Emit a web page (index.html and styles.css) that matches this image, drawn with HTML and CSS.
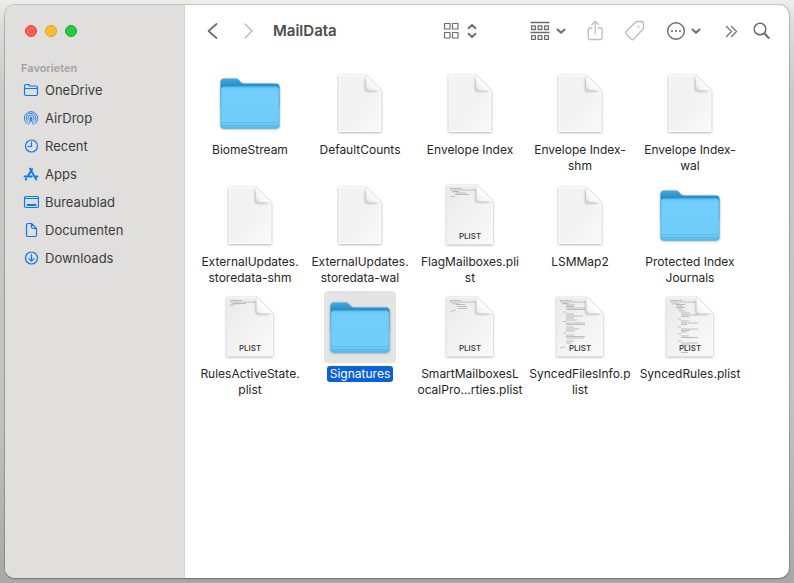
FILE: index.html
```html
<!DOCTYPE html>
<html lang="nl">
<head>
<meta charset="utf-8">
<meta name="viewport" content="width=device-width, initial-scale=1">
<title>MailData</title>
<link rel="stylesheet" href="styles.css">
</head>
<body>
<svg class="defs" aria-hidden="true">
  <defs>
    <linearGradient id="folder-back" x1="0" y1="0" x2="0" y2="1"><stop offset="0" stop-color="#4aa9dc"/><stop offset=".35" stop-color="#1583c1"/></linearGradient>
    <linearGradient id="folder-front" x1="0" y1="0" x2="0" y2="1"><stop offset="0" stop-color="#68c5f4"/><stop offset=".1" stop-color="#72cffb"/><stop offset="1" stop-color="#70cdfb"/></linearGradient>
    <linearGradient id="paper" x1="0" y1="0" x2="1" y2="1"><stop offset="0" stop-color="#f3f3f3"/><stop offset=".5" stop-color="#f2f2f2"/><stop offset="1" stop-color="#fafafa"/></linearGradient>
    <linearGradient id="paper-plist" x1="0" y1="0" x2="1" y2="1"><stop offset="0" stop-color="#eaeaea"/><stop offset="1" stop-color="#fafafa"/></linearGradient>
    <linearGradient id="curl" gradientUnits="userSpaceOnUse" x1="42" y1="23" x2="50" y2="15"><stop offset="0" stop-color="#cfcfcf"/><stop offset=".35" stop-color="#f2f2f2"/><stop offset="1" stop-color="#fff"/></linearGradient>
    <filter id="soft" x="-20%" y="-20%" width="140%" height="140%" color-interpolation-filters="sRGB"><feDropShadow dx="0" dy=".6" stdDeviation=".8" flood-opacity=".38"/></filter>
    <filter id="blur" x="-50%" y="-50%" width="200%" height="200%"><feGaussianBlur stdDeviation="1.3"/></filter>
  </defs>
  <symbol id="folder" viewBox="0 0 72 72">
    <g filter="url(#soft)">
      <path fill="url(#folder-back)" d="M6.500 15q0-3.500 3.500-3.500h12c3 0 4.500 5 8 5h32q3.500 0 3.500 3.500v20h-59z"/>
      <path fill="url(#folder-front)" d="M6.500 23q0-3.500 3.500-3.500h52q3.500 0 3.500 3.500v35q0 3.500-3.500 3.500h-52q-3.500 0-3.500-3.500z"/>
    </g>
    <path fill="#5cbbe9" d="M6.500 57.500h59v.5q0 3.500-3.500 3.500h-52q-3.500 0-3.500-3.500z"/>
    <path fill="none" stroke="#55b3e1" stroke-opacity=".6" d="M7 55.500h58M7 58V23q0-3 3-3h52q3 0 3 3v35q0 3-3 3H10q-3 0-3-3"/>
  </symbol>
  <symbol id="doc" viewBox="0 0 72 72">
    <path filter="url(#soft)" fill="#fff" d="M14.500 8H42l15.500 15.500V65h-43z"/>
    <path fill="url(#paper)" d="M15.500 9H42l14.500 15v40h-41z"/>
    <path filter="url(#blur)" fill="#777" fill-opacity=".5" d="M41 11v11q0 2.500 2.500 2.500H54z"/>
    <path fill="url(#curl)" stroke="#d8d8d8" stroke-width=".4" d="M42 8v13q0 2.500 2.500 2.500h13z"/>
  </symbol>
  <symbol id="plist" viewBox="0 0 72 72">
    <path filter="url(#soft)" fill="#fff" d="M12.500 6H43l16 16.500V65.500H12.500z"/>
    <path fill="url(#paper-plist)" d="M13 6.500h29.500L58.500 23v42H13z"/>
  </symbol>
  <symbol id="plist-curl" viewBox="0 0 72 72">
    <path filter="url(#blur)" fill="#777" fill-opacity=".5" d="M41.500 9v12q0 2.500 2.500 2.500H56z"/>
    <path fill="url(#curl)" stroke="#d8d8d8" stroke-width=".4" d="M42.500 6v14q0 2.500 2.500 2.500h14z"/>
  </symbol>
  <symbol id="code-head" viewBox="0 0 72 72">
    <path fill="none" stroke="#b0b0b0" stroke-width=".8" stroke-dasharray="3 .4 5 .3" d="M16 9.500h12M16 11h26M18 12.800h7"/>
  </symbol>
  <symbol id="chev" viewBox="0 0 10 8"><path fill="none" stroke="currentColor" stroke-width="2" stroke-linecap="round" stroke-linejoin="round" d="M1.500 2.500 5 5.800l3.500-3.300"/></symbol>
</svg>

<div class="window">
  <aside class="sidebar">
    <div class="lights">
      <button class="light red" aria-label="Sluit"></button>
      <button class="light yellow" aria-label="Minimaliseer"></button>
      <button class="light green" aria-label="Zoom"></button>
    </div>
    <h2 class="section">Favorieten</h2>
    <nav class="places">
      <a href="#"><svg viewBox="0 0 16 16"><path d="M1.500 12V4q0-1.500 1.500-1.500h2.500l1.500 1.500h6q1.500 0 1.500 1.500V12q0 1.500-1.500 1.500H3q-1.500 0-1.500-1.500zM1.500 6.500h13"/></svg>OneDrive</a>
      <a href="#"><svg viewBox="0 0 16 16"><path class="fine" d="M4 13.700a6.700 6.700 0 1 1 8 0M4.900 11.700a4.800 4.800 0 1 1 6.200 0M6.100 10.200a2.900 2.900 0 1 1 3.800 0"/><circle class="solid" cx="8" cy="8.200" r="1.200"/><path class="fine" d="M8 9.500 5.800 14.200M8 9.500l2.200 4.700"/></svg>AirDrop</a>
      <a href="#"><svg viewBox="0 0 16 16"><circle cx="8.500" cy="8" r="6"/><path d="M8.500 4v4.500H5"/></svg>Recent</a>
      <a href="#"><svg viewBox="0 0 16 16"><path class="heavy" d="M9.200 3 4.700 10.500M7 2.500l6.200 11M1.500 10.500h7.300M11.500 10.500h3M3.300 12.800l-.6 1"/></svg>Apps</a>
      <a href="#"><svg viewBox="0 0 16 16"><rect x="1.500" y="2.500" width="14" height="11" rx="1.500"/><path d="M2 4.500h13"/><path class="heavy" d="M4.500 11h8"/></svg>Bureaublad</a>
      <a href="#"><svg viewBox="0 0 16 16"><path d="M3.500 3q0-1.500 1.500-1.500h3.500l5 5V13q0 1.500-1.500 1.500H5q-1.500 0-1.500-1.500zM8.500 1.500v3.500q0 1.500 1.500 1.500h3.500"/></svg>Documenten</a>
      <a href="#"><svg viewBox="0 0 16 16"><circle cx="8.500" cy="8" r="6"/><path d="M8.500 4.500v6.500M6 8.700l2.500 2.500L11 8.700"/></svg>Downloads</a>
    </nav>
  </aside>

  <main class="content">
    <header class="toolbar">
      <div class="history">
        <button aria-label="Vorige"><svg width="16" height="20" viewBox="0 0 16 20"><path stroke-width="1.700" d="M11.500 3 3.500 10l8 7"/></svg></button>
        <button class="dim" aria-label="Volgende"><svg width="16" height="20" viewBox="0 0 16 20"><path stroke-width="1.500" d="M4 3l7 7-7 7"/></svg></button>
      </div>
      <h1>MailData</h1>
      <div class="tools">
        <button class="view" aria-label="Weergave"><svg width="36" height="20" viewBox="0 0 36 20"><path stroke-width="1.200" d="M2.500 2.500h5.500v5.500H2.500zM10.500 2.500h5.500v5.500h-5.500zM2.500 11.500h5.500v5.500H2.500zM10.500 11.500h5.500v5.500h-5.500z"/><path stroke-width="1.900" d="M26.500 7.200 30 4l3.500 3.200M26.500 12.800l3.500 3.200 3.500-3.200"/></svg></button>
        <button aria-label="Groepeer"><svg width="36" height="20" viewBox="0 0 36 20"><path stroke-width="1.300" d="M1 1.500h18M1 11.500h18M1.600 4.800h3.800v3.700H1.600zM8.100 4.800h3.800v3.700H8.100zM14.600 4.800h3.800v3.700h-3.800zM1.600 14.700h3.800v3.700H1.600zM8.100 14.700h3.800v3.700H8.100zM14.600 14.700h3.800v3.700h-3.800z"/><use href="#chev" x="26" y="6" width="10" height="8"/></svg></button>
        <button class="dim" aria-label="Deel"><svg width="18" height="22" viewBox="0 0 18 22"><path stroke-width="1.300" d="M6 8H3.700Q2.200 8 2.200 9.500v8.500q0 1.500 1.500 1.500h11q1.500 0 1.500-1.500V9.500q0-1.500-1.500-1.500H12.200M9.200 13.500V1.500M6 4.500l3.200-3.200 3.200 3.200"/></svg></button>
        <button class="dim" aria-label="Tags"><svg width="22" height="22" viewBox="0 0 22 22"><path stroke-width="1.300" d="M2 11.700 11.500 2.300q.8-.8 1.900-.8h4q2.100 0 2.100 2.100v4q0 1.100-.8 1.900l-9.200 9.800q-1 1-2 0L2 13.700q-1-1 0-2z"/><circle class="dot" cx="14.500" cy="6.800" r="1"/></svg></button>
        <button aria-label="Meer"><svg width="36" height="20" viewBox="0 0 36 20"><circle cx="10" cy="10" r="8.300" stroke-width="1.400"/><path stroke-width="2.200" d="M6 10h.01M10 10h.01M14 10h.01"/><use href="#chev" x="25" y="6" width="10" height="8"/></svg></button>
        <div class="end">
          <button aria-label="Meer knoppen"><svg width="20" height="20" viewBox="0 0 20 20"><path stroke-width="1.200" d="M4.500 5.500 9.500 10.500l-5 5M9.500 5.500l5 5-5 5"/></svg></button>
          <button aria-label="Zoek"><svg width="20" height="20" viewBox="0 0 20 20"><circle cx="8" cy="8" r="5.800" stroke-width="1.500"/><path stroke-width="2" d="m12.500 12.500 4.200 4.500"/></svg></button>
        </div>
      </div>
    </header>

    <section class="files" aria-label="Bestanden">
      <button class="file"><svg class="icon" viewBox="0 0 72 72"><use href="#folder"/></svg><span>BiomeStream</span></button>
      <button class="file"><svg class="icon" viewBox="0 0 72 72"><use href="#doc"/></svg><span>DefaultCounts</span></button>
      <button class="file"><svg class="icon" viewBox="0 0 72 72"><use href="#doc"/></svg><span>Envelope Index</span></button>
      <button class="file"><svg class="icon" viewBox="0 0 72 72"><use href="#doc"/></svg><span>Envelope Index-<br>shm</span></button>
      <button class="file"><svg class="icon" viewBox="0 0 72 72"><use href="#doc"/></svg><span>Envelope Index-<br>wal</span></button>

      <button class="file"><svg class="icon" viewBox="0 0 72 72"><use href="#doc"/></svg><span>ExternalUpdates.<br>storedata-shm</span></button>
      <button class="file"><svg class="icon" viewBox="0 0 72 72"><use href="#doc"/></svg><span>ExternalUpdates.<br>storedata-wal</span></button>
      <button class="file"><svg class="icon" viewBox="0 0 72 72"><use href="#plist"/><use href="#code-head"/><path class="code" d="M19 12.500h5M22 14h10M21 15.500h14M17 17.500h4"/><use href="#plist-curl"/><text x="36" y="60">PLIST</text></svg><span>FlagMailboxes.pli<br>st</span></button>
      <button class="file"><svg class="icon" viewBox="0 0 72 72"><use href="#doc"/></svg><span>LSMMap2</span></button>
      <button class="file"><svg class="icon" viewBox="0 0 72 72"><use href="#folder"/></svg><span>Protected Index<br>Journals</span></button>

      <button class="file"><svg class="icon" viewBox="0 0 72 72"><use href="#plist"/><use href="#code-head"/><path class="code" d="M20 12.500h12M16 14h4"/><use href="#plist-curl"/><text x="36" y="60">PLIST</text></svg><span>RulesActiveState.<br>plist</span></button>
      <button class="file selected" aria-pressed="true"><svg class="icon" viewBox="0 0 72 72"><use href="#folder"/></svg><span>Signatures</span></button>
      <button class="file"><svg class="icon" viewBox="0 0 72 72"><use href="#plist"/><use href="#code-head"/><path class="code" d="M22 13.500h9M23 15.500h10M24 17.500h9M17 20.500l5-1.500"/><use href="#plist-curl"/><text x="36" y="60">PLIST</text></svg><span>SmartMailboxesL<br>ocalPro…rties.plist</span></button>
      <button class="file"><svg class="icon" viewBox="0 0 72 72"><use href="#plist"/><use href="#code-head"/><path class="code" d="M19 12.500h4M22 14h9M22 15.500h8M22 17h19M22 18.500h19M19 21h3M22 23h8M22 25h17M22 27h8M22 29h11M19 30.500h3M22 32h19M22 33.500h19M22 36h8M22 38h13M22 40h9M19 42h3M22 44h8M22 45.500h19M22 47h18M22 50h8M22 52h6M16 57l5-1.500"/><use href="#plist-curl"/><text x="36" y="60">PLIST</text></svg><span>SyncedFilesInfo.p<br>list</span></button>
      <button class="file"><svg class="icon" viewBox="0 0 72 72"><use href="#plist"/><use href="#code-head"/><path class="code" d="M22 13.500h9M22 15h7M22 16.500h9M24 18h4M25 20h6M27 22h9M27 24h17M27 25.500h8M24 28h3M27 30h8M27 32h17M27 33.500h6M24 36h3M27 38h17M27 39.500h9M27 41h6M24 43h3M27 45h8M27 46.500h17M24 50h3M27 52h17M27 54h9M27 61.500h7"/><use href="#plist-curl"/><text x="36" y="60">PLIST</text></svg><span>SyncedRules.plist</span></button>
    </section>
  </main>
</div>
</body>
</html>
```

FILE: styles.css
```css
* {
  box-sizing: border-box;
}

body {
  margin: 0;
  min-height: 100vh;
  padding: 5px;
  display: flex;
  background: linear-gradient(#ededed, #dcdcdc 24px, #cacaca 90px, #c2c2c2 70%, #a8a8a8);
  font-family: Inter, "Liberation Sans", sans-serif;
  font-size: 13px;
  color: #262626;
}

button {
  appearance: none;
  margin: 0;
  padding: 0;
  border: 0;
  background: none;
  font: inherit;
  color: inherit;
}

svg {
  display: block;
  flex: none;
}

.defs {
  position: absolute;
  width: 0;
  height: 0;
}

.window {
  flex: 1;
  display: flex;
  overflow: hidden;
  border-radius: 10px;
  background: #fff;
  box-shadow: 0 0 0 1px rgba(0, 0, 0, .15), 0 1px 2px rgba(0, 0, 0, .2);
}

.sidebar {
  flex: none;
  width: 180px;
  padding: 20px 16px;
  background: #e0dfdd;
  border-right: 1px solid #d6d5d3;
}

.lights {
  display: flex;
  gap: 8px;
  padding-left: 4px;
}

.light {
  width: 12px;
  height: 12px;
  border: 1px solid;
  border-radius: 50%;
}

.red {
  background: #ff5f57;
  border-color: #e2463f;
}

.yellow {
  background: #febc2e;
  border-color: #e0a023;
}

.green {
  background: #28c840;
  border-color: #1aab29;
}

.section {
  margin: 23px 0 0;
  font-size: 11px;
  line-height: 16px;
  font-weight: 600;
  color: #a3a2a0;
}

.places a {
  display: flex;
  align-items: center;
  gap: 6px;
  height: 28px;
  padding-left: 2px;
  color: #3c3c3c;
  text-decoration: none;
}

.places svg {
  width: 16px;
  height: 16px;
  fill: none;
  stroke: #0a78f5;
  stroke-width: 1.2;
  stroke-linecap: round;
  stroke-linejoin: round;
}

.places .heavy {
  stroke-width: 1.8;
}

.places .fine {
  stroke-width: .9;
}

.places .solid {
  fill: #0a78f5;
  stroke: none;
}

.content {
  flex: 1;
  min-width: 0;
}

.toolbar {
  display: flex;
  align-items: center;
  height: 52px;
  padding: 0 17px 0 20px;
  color: #6c6c6c;
}

.toolbar svg {
  fill: none;
  stroke: currentColor;
  stroke-linecap: round;
  stroke-linejoin: round;
}

.toolbar .dot {
  fill: currentColor;
  stroke: none;
}

.history {
  display: flex;
  gap: 20px;
}

.dim {
  color: #bdbdbd;
}

h1 {
  margin: 0 0 0 16px;
  font-size: 15px;
  line-height: 20px;
  font-weight: 600;
  color: #4c4c4c;
}

.tools {
  display: flex;
  align-items: center;
  gap: 20px;
  margin-left: auto;
}

.view {
  margin-right: 32px;
}

.end {
  display: flex;
  gap: 10px;
}

.files {
  display: grid;
  grid-template-columns: repeat(auto-fill, 110px);
  grid-auto-rows: 112px;
  padding: 10px;
}

.file {
  display: flex;
  flex-direction: column;
  align-items: center;
  gap: 3px;
  font-size: 12px;
  line-height: 16px;
  text-align: center;
  white-space: nowrap;
}

.icon {
  width: 72px;
  height: 72px;
  border-radius: 4px;
}

.icon text {
  font-size: 8px;
  font-weight: 500;
  text-anchor: middle;
  fill: #333;
}

.code {
  fill: none;
  stroke: #a6a6a6;
  stroke-width: .7;
}

.selected .icon {
  background: #e4e4e4;
}

.selected span {
  padding: 0 3px;
  border-radius: 3px;
  background: #0a60dc;
  color: #fff;
}
```
